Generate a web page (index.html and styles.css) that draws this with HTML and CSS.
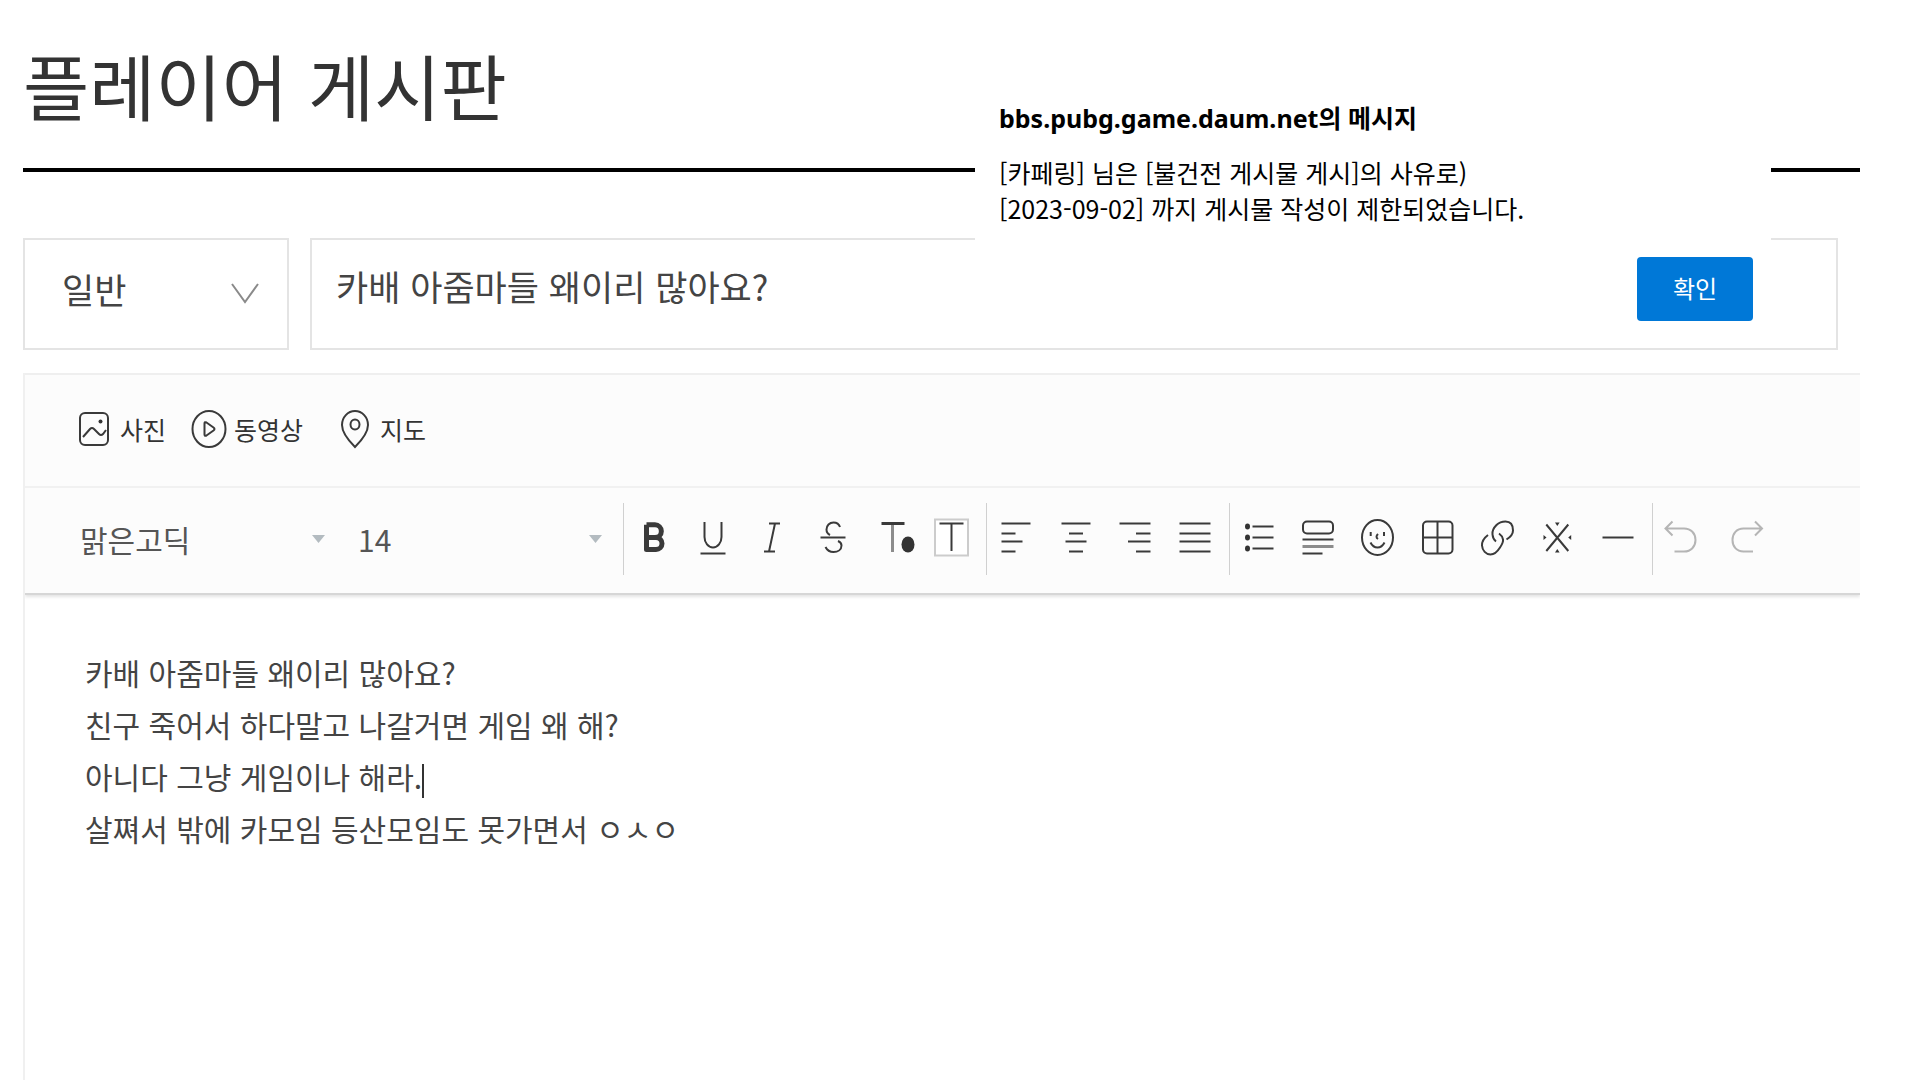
FILE: index.html
```html
<!DOCTYPE html>
<html lang="ko">
<head>
<meta charset="utf-8">
<meta name="viewport" content="width=device-width, initial-scale=1">
<title>플레이어 게시판</title>
<link rel="stylesheet" href="styles.css">
</head>
<body>
<main class="board">
  <h1 class="board-title">플레이어 게시판</h1>

  <form class="post-form">
    <div class="subject-row">
      <div class="category">
        <select class="category-select" aria-label="분류"><option>일반</option></select>
        <svg class="category-arrow" width="28" height="22" viewBox="0 0 28 22" aria-hidden="true"><path d="M1 1l13 18L27 1"/></svg>
      </div>
      <input class="subject-input" type="text" aria-label="제목" value="카배 아줌마들 왜이리 많아요?">
    </div>

    <section class="editor">
      <div class="toolbars">
        <div class="attach-bar">
          <button type="button" class="attach-button">
            <svg width="40" height="40" viewBox="0 0 40 40" aria-hidden="true"><rect x="5" y="4" width="28" height="32" rx="5"/><path d="M8 28l7-8q2-2 4 0l5 5q2 2 4 0l3-4"/><circle class="solid" cx="25.500" cy="12.500" r="2"/></svg>
            <span>사진</span>
          </button>
          <button type="button" class="attach-button">
            <svg width="40" height="40" viewBox="0 0 40 40" aria-hidden="true"><ellipse cx="20" cy="20" rx="16.500" ry="18"/><path d="M15.500 14.500v11q0 2 2 1l7-5q2-1.500 0-3l-7-5q-2-1-2 1z"/></svg>
            <span>동영상</span>
          </button>
          <button type="button" class="attach-button">
            <svg width="40" height="40" viewBox="0 0 40 40" aria-hidden="true"><path d="M20 38C13 31 7 23 7 16a13 14 0 0 1 26 0c0 7-6 15-13 22z"/><ellipse cx="20" cy="15.500" rx="4.500" ry="5"/></svg>
            <span>지도</span>
          </button>
        </div>

        <div class="format-bar">
          <div class="picker picker-font">
            <select aria-label="글꼴"><option>맑은고딕</option></select>
            <svg width="13" height="8" viewBox="0 0 13 8" aria-hidden="true"><path d="M0 0h13L6.500 8z"/></svg>
          </div>
          <div class="picker picker-size">
            <select aria-label="글자 크기"><option>14</option></select>
            <svg width="13" height="8" viewBox="0 0 13 8" aria-hidden="true"><path d="M0 0h13L6.500 8z"/></svg>
          </div>

          <div class="tool-group">
            <button type="button" class="tool" aria-label="굵게"><svg viewBox="1 0 60 44"><path class="heavy" d="M22.500 7.800v24.700h9.500a6 6 0 0 0 0-12h-9.500M22.500 7.800h8.500a6 6 0 0 1 0 12.700"/></svg></button>
            <button type="button" class="tool" aria-label="밑줄"><svg viewBox="1 0 60 44"><path d="M20.500 5v15a8.500 10.500 0 0 0 17 0V5M16.500 36.500h25"/></svg></button>
            <button type="button" class="tool" aria-label="기울임"><svg viewBox="1 0 60 44"><path d="M25 6.500h11M20 34.500h11M31 6.500l-6 28"/></svg></button>
            <button type="button" class="tool" aria-label="취소선"><svg viewBox="1 0 60 44"><path d="M36 10c-1-3-3.500-4.500-6.500-4.500-4 0-7 3-7 7 0 3 1.500 4.500 3.500 5.500M16.500 20.500h25M34 24c2.500 1 3.500 2.500 3.500 4.500 0 4-3.500 6.500-8 6.500-4 0-6.500-2-8-5"/></svg></button>
            <button type="button" class="tool" aria-label="글자색"><svg viewBox="1 0 60 44"><path class="soft" d="M28.500 7v28"/><path class="bar" d="M17.500 6.500h23"/><ellipse class="solid" cx="44" cy="27.500" rx="6.500" ry="8"/></svg></button>
            <button type="button" class="tool" aria-label="글자 배경색"><svg viewBox="1 0 60 44"><rect class="swatch" x="11" y="2.500" width="33" height="36"/><path d="M15.500 6.500h24M27.500 6.500V34"/></svg></button>
          </div>

          <div class="tool-group">
            <button type="button" class="tool" aria-label="왼쪽 정렬"><svg viewBox="0 0 60 44"><path d="M13.500 6.500h29M13.500 16.500h14M13.500 24.500h21M13.500 34.500h14"/></svg></button>
            <button type="button" class="tool" aria-label="가운데 정렬"><svg viewBox="0 0 60 44"><path d="M13.500 6.500h29M21 16.500h14M17.500 24.500h21M21 34.500h14"/></svg></button>
            <button type="button" class="tool" aria-label="오른쪽 정렬"><svg viewBox="0 0 60 44"><path d="M11.500 6.500h31M28 16.500h14.500M20 24.500h22.500M28 34.500h14.500"/></svg></button>
            <button type="button" class="tool" aria-label="양쪽 정렬"><svg viewBox="0 0 60 44"><path d="M11.500 6.500h31M11.500 16.500h31M11.500 24.500h31M11.500 34.500h31"/></svg></button>
          </div>

          <div class="tool-group">
            <button type="button" class="tool" aria-label="목록"><svg viewBox="0 0 60 44"><path d="M21.500 9.500h21M21.500 20.500h21M21.500 31.500h21"/><ellipse class="solid" cx="16.500" cy="9.500" rx="2.500" ry="3"/><ellipse class="solid" cx="16.500" cy="20.500" rx="2.500" ry="3"/><ellipse class="solid" cx="16.500" cy="31.500" rx="2.500" ry="3"/></svg></button>
            <button type="button" class="tool" aria-label="인용구"><svg viewBox="0 0 60 44"><rect x="12" y="4.500" width="30" height="12" rx="4"/><path d="M11.500 22.500h31M11.500 36.500h20"/><path class="soft" d="M11.500 29.500h31"/></svg></button>
            <button type="button" class="tool" aria-label="이모티콘"><svg viewBox="0 0 60 44"><ellipse cx="26.500" cy="20.500" rx="15.500" ry="17.500"/><path d="M19.700 15v4M33 15v4M27 17q-3 3 0 5M19.500 25.500q2.500 5 7 5t7-5"/></svg></button>
            <button type="button" class="tool" aria-label="표"><svg viewBox="0 0 60 44"><rect x="12" y="4.500" width="29.500" height="32" rx="4"/><path d="M26.500 4.500v32M12 20.500h29.500"/></svg></button>
            <button type="button" class="tool" aria-label="링크"><svg viewBox="0 0 60 44"><path d="M35.500 22.500C39.500 20 42 17.500 42 13.500 42 8 39.500 4.500 34.500 4.500 31 4.500 28 5.500 25.500 8 22.500 11 21 14 21.500 17.500c.3 3.500 1.500 5.500 3.500 7M17 18C13 21 10.800 24 11 28.500c.3 5 4 9 8.500 9 4 0 7-3 9.500-7 2-3 3.500-5.500 3-8-.5-2.500-1.800-4.500-4-6"/></svg></button>
            <button type="button" class="tool" aria-label="특수문자"><svg viewBox="0 0 60 44"><path d="M15.300 7.500l22 26.500M37.300 7.500l-22 26.500"/><g class="solid"><path d="M24 5.500h4.600L26.300 9z"/><path d="M24 35.500h4.600L26.300 32z"/><path d="M12.500 18v5l3-2.500z"/><path d="M40.200 18v5l-3-2.500z"/></g></svg></button>
            <button type="button" class="tool" aria-label="구분선"><svg viewBox="0 0 60 44"><path d="M11.500 20.500h31"/></svg></button>
          </div>

          <div class="tool-group history">
            <button type="button" class="tool" aria-label="실행 취소" disabled><svg viewBox="0 0 60 44"><path d="M18.500 4.500l-7 7 7 7M12 11.500h18c7 0 11.500 5 11.500 11.500S37 34.500 30 34.500h-9.500"/></svg></button>
            <button type="button" class="tool" aria-label="다시 실행" disabled><svg viewBox="0 0 60 44"><path d="M35 4.500l7 7-7 7M41.500 11.500h-18C16.500 11.500 12.500 16.500 12.500 23s4 11.500 11 11.500H33"/></svg></button>
          </div>
        </div>
      </div>

      <div class="content" role="textbox" aria-multiline="true" aria-label="본문">
        <p>카배 아줌마들 왜이리 많아요?</p>
        <p>친구 죽어서 하다말고 나갈거면 게임 왜 해?</p>
        <p>아니다 그냥 게임이나 해라.<span class="caret"></span></p>
        <p>살쪄서 밖에 카모임 등산모임도 못가면서 ㅇㅅㅇ</p>
      </div>
    </section>
  </form>
</main>

<div class="alert" role="alertdialog" aria-labelledby="alert-title" aria-describedby="alert-text">
  <h2 class="alert-title" id="alert-title">bbs.pubg.game.daum.net의 메시지</h2>
  <p class="alert-text" id="alert-text">[카페링] 님은 [불건전 게시물 게시]의 사유로)<br>[2023-09-02] 까지 게시물 작성이 제한되었습니다.</p>
  <div class="alert-actions"><button type="button" class="alert-ok">확인</button></div>
</div>
</body>
</html>
```
FILE: styles.css
```css
* {
  box-sizing: border-box;
}

body {
  margin: 0;
  min-height: 100vh;
  display: flex;
  flex-direction: column;
  position: relative;
  background: #fff;
  color: #333;
  font-family: "Noto Sans CJK KR", sans-serif;
}

h1, h2, p {
  margin: 0;
}

button, select, input {
  margin: 0;
  padding: 0;
  border: 0;
  background: none;
  color: inherit;
  font-family: inherit;
}

select {
  appearance: none;
}

svg {
  display: block;
  fill: none;
  stroke: #3a3a3a;
  stroke-width: 2;
}

.solid {
  fill: #333;
  stroke: none;
}

.board {
  flex: 1;
  display: flex;
  flex-direction: column;
  padding: 36px 60px 0 23px;
}

.board-title {
  padding-bottom: 36px;
  border-bottom: 4px solid #000;
  font-size: 72px;
  font-weight: 400;
  line-height: 96px;
}

.post-form {
  flex: 1;
  display: flex;
  flex-direction: column;
  gap: 23px;
  padding-top: 66px;
}

.subject-row {
  display: flex;
  gap: 21px;
  height: 112px;
  margin-right: 22px;
}

.category {
  display: grid;
  width: 266px;
  align-items: center;
}

.category-select,
.category-arrow {
  grid-area: 1 / 1;
}

.category-select,
.subject-input {
  height: 112px;
  border: 2px solid #e4e4e4;
  font-size: 35px;
  color: #444;
}

.category-select {
  padding: 0 40px 12px 37px;
}

.category-arrow {
  justify-self: end;
  margin-right: 30px;
  stroke: #8a8a8a;
  pointer-events: none;
}

.subject-input {
  flex: 1;
  min-width: 0;
  padding: 0 24px 18px;
}

.editor {
  flex: 1;
  border-left: 2px solid #f0f0f0;
  overflow: hidden;
}

.toolbars {
  border-top: 2px solid #efefef;
  border-bottom: 2px solid #d6d6d6;
  background: #fcfcfc;
  box-shadow: 0 2px 3px #e4e4e4;
}

.attach-bar {
  display: grid;
  grid-template-columns: 114px 146px auto;
  justify-content: start;
  align-items: center;
  height: 113px;
  padding: 0 50px 4px;
  border-bottom: 2px solid #f1f1f1;
}

.attach-button {
  display: flex;
  align-items: center;
  gap: 5px;
  font-size: 25px;
  line-height: 36px;
}

.format-bar {
  display: flex;
  align-items: center;
  padding: 15px 0 18px 55px;
}

.picker {
  display: grid;
  align-items: center;
}

.picker select,
.picker svg {
  grid-area: 1 / 1;
}

.picker select {
  height: 72px;
  color: #555;
  font-size: 30px;
}

.picker svg {
  justify-self: end;
  fill: #b3bbc0;
  stroke: none;
  pointer-events: none;
}

.picker-font {
  width: 278px;
}

.picker-font svg {
  margin-right: 33px;
}

.picker-size {
  width: 265px;
}

.picker-size svg {
  margin-right: 21px;
}

.tool-group {
  display: flex;
  align-items: center;
  height: 72px;
  padding: 0 1px;
  border-left: 1px solid #d0d0d0;
}

.tool,
.tool svg {
  width: 60px;
  height: 44px;
}

.heavy {
  stroke-width: 5;
  stroke-linejoin: round;
}

.soft {
  stroke: #8c8c8c;
  stroke-width: 3;
}

.bar {
  stroke-width: 3;
}

.swatch {
  fill: #fff;
  stroke: #ccc;
}

.history {
  gap: 6px;
}

.history svg {
  stroke: #b5b5b5;
}

.content {
  padding: 51px 60px;
  color: #444;
  font-size: 30px;
  line-height: 52px;
}

.caret {
  display: inline-block;
  width: 2px;
  height: 34px;
  background: #333;
  vertical-align: middle;
}

/* Browser message shown over the form */
.alert {
  position: absolute;
  top: 76px;
  right: 149px;
  width: 796px;
  padding: 24px 18px 23px 24px;
  background: #fff;
  color: #000;
}

.alert-title {
  font-family: "Noto Sans", "Noto Sans CJK KR", sans-serif;
  font-size: 25px;
  font-weight: 700;
  line-height: 36px;
}

.alert-text {
  margin-top: 18px;
  font-size: 25px;
  line-height: 36px;
}

.alert-actions {
  display: flex;
  justify-content: flex-end;
  margin-top: 31px;
}

.alert-ok {
  width: 116px;
  height: 64px;
  padding-bottom: 4px;
  border-radius: 4px;
  background: #0078d7;
  color: #fff;
  font-size: 24px;
}
```
